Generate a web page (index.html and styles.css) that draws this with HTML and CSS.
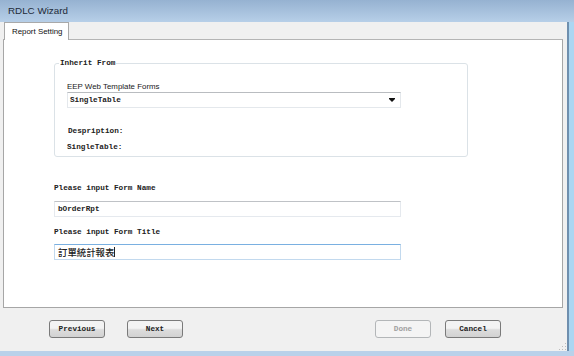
FILE: index.html
```html
<!DOCTYPE html>
<html lang="en">
  <head>
    <meta charset="UTF-8" />
    <title>RDLC Wizard</title>
    <link rel="stylesheet" href="styles.css">
  </head>
  <body>
    <div class="window">
      <div class="titlebar">RDLC Wizard</div>
      <div class="frame">
        <div class="client">
          <div class="tabstrip">
            <div class="tab">Report Setting</div>
          </div>
          <div class="panel">
            <fieldset class="group">
              <legend>Inherit From</legend>
              <div class="caption">EEP Web Template Forms</div>
              <div class="combo">
                <span>SingleTable</span>
                <span class="arrow"></span>
              </div>
              <div class="label desc">Despription:</div>
              <div class="label single">SingleTable:</div>
            </fieldset>
            <div class="label form-label">Please input Form Name</div>
            <div class="field">bOrderRpt</div>
            <div class="label form-label second">Please input Form Title</div>
            <div class="field focused"><span class="cjk">訂單統計報表</span><span class="caret"></span></div>
          </div>
          <div class="buttons">
            <div class="btn">Previous</div>
            <div class="btn next">Next</div>
            <div class="spacer"></div>
            <div class="btn disabled">Done</div>
            <div class="btn cancel">Cancel</div>
            <div class="grip"></div>
          </div>
        </div>
        <div class="edge"></div>
      </div>
    </div>
  </body>
</html>
```
FILE: styles.css
```css
* {
  margin: 0;
  padding: 0;
  box-sizing: border-box;
}
body {
  width: 574px;
  height: 356px;
  overflow: hidden;
  background: #b9d1ea;
}
.window {
  width: 574px;
  height: 356px;
  display: flex;
  flex-direction: column;
  background: #b9d1ea;
}
.titlebar {
  height: 22px;
  flex: none;
  padding: 5px 0 0 8px;
  background: linear-gradient(#96b2d1, #b7cfe8);
  font-family: "Liberation Sans", sans-serif;
  font-size: 9.8px;
  color: #1e2a38;
}
.frame {
  flex: 1;
  display: flex;
  padding: 0 0 5px 0;
}
.client {
  flex: 1;
  display: flex;
  flex-direction: column;
  background: #f0f0f0;
  padding-left: 3px;
  position: relative;
}
.edge {
  width: 7px;
  border-left: 2px solid #6f8fae;
  background: #acd6f2;
}
.tabstrip {
  height: 17px;
  display: flex;
  padding-left: 1px;
  flex: none;
}
.tab {
  width: 65px;
  height: 18px;
  background: #fff;
  border: 1px solid #a9a9a9;
  border-bottom: 0;
  font-family: "Liberation Sans", sans-serif;
  font-size: 7.9px;
  color: #111;
  padding: 4px 0 0 7px;
  position: relative;
  z-index: 1;
}
.panel {
  height: 269px;
  margin-right: 4px;
  background: #fff;
  border: 1px solid #a6a6a6;
  border-top-color: #b4b4b4;
  padding: 19px 0 0 50px;
}
.label,
.btn,
.combo,
.field,
legend {
  font-family: "Liberation Mono", monospace;
  font-size: 7.7px;
  font-weight: bold;
  color: #222;
}
.group {
  width: 414px;
  height: 98px;
  border: 1px solid #dbe2e7;
  border-radius: 3px;
  padding: 0 0 0 12px;
}
legend {
  margin-left: -8px;
  padding: 0 1px;
}
.caption {
  font-family: "Liberation Sans", sans-serif;
  font-size: 7.9px;
  color: #1a1a1a;
  margin-top: 15px;
  height: 10px;
}
.combo {
  width: 334px;
  height: 16px;
  border: 1px solid #e4e8ec;
  border-top-color: #b9bcc0;
  display: flex;
  justify-content: space-between;
  align-items: center;
  padding: 0 5px 0 2px;
}
.arrow {
  width: 0;
  height: 0;
  border-left: 3px solid transparent;
  border-right: 3px solid transparent;
  border-top: 3px solid #111;
  margin-top: 1px;
  box-shadow: 0 -1px 0 #111;
}
.desc {
  margin-top: 19px;
  padding-left: 1px;
}
.single {
  margin-top: 8px;
}
.form-label {
  margin-top: 27px;
}
.form-label.second {
  margin-top: 11px;
}
.field {
  margin-top: 9px;
  width: 347px;
  height: 16px;
  border: 1px solid #e5e9ee;
  border-top-color: #bfc2c6;
  padding: 3px 0 0 3px;
}
.field.focused {
  margin-top: 8px;
  border: 1px solid #c2d9ee;
  border-top-color: #7ab0e1;
  display: flex;
  align-items: center;
  padding: 0 0 0 3px;
}
.cjk {
  font-family: "Noto Sans CJK TC", sans-serif;
  font-size: 9.4px;
  font-weight: 500;
  color: #222;
}
.caret {
  width: 1px;
  height: 10px;
  background: #222;
}
.buttons {
  flex: 1;
  display: flex;
  align-items: flex-start;
  padding: 12px 0 0 46px;
  position: relative;
}
.btn {
  width: 56px;
  height: 18px;
  border: 1px solid #7a7a7a;
  border-radius: 3px;
  background: linear-gradient(#f3f3f3 45%, #dcdcdc 55%, #d2d2d2);
  display: flex;
  justify-content: center;
  align-items: center;
}
.next {
  margin-left: 22px;
}
.spacer {
  flex: 1;
}
.disabled {
  border-color: #b3b6b8;
  background: #f4f4f4;
  color: #a0a0a0;
}
.cancel {
  margin-left: 14px;
  margin-right: 66px;
}
.grip {
  position: absolute;
  right: 1px;
  bottom: 1px;
  width: 8px;
  height: 8px;
  background:
    radial-gradient(circle, #bcbcbc 0.8px, transparent 1px) 0 0 / 3px 3px;
  clip-path: polygon(100% 0, 100% 100%, 0 100%);
}
```
